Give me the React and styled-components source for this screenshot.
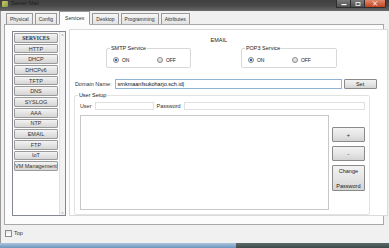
import React from "react";
import styled, { createGlobalStyle } from "styled-components";

const GlobalStyle = createGlobalStyle`
  html, body {
    margin: 0;
    padding: 0;
    background: #f0f0f0;
  }
  body {
    font-family: "Liberation Sans", Arial, sans-serif;
    font-size: 5.5px;
    color: #1a1a1a;
  }
`;

const services = [
  "SERVICES",
  "HTTP",
  "DHCP",
  "DHCPv6",
  "TFTP",
  "DNS",
  "SYSLOG",
  "AAA",
  "NTP",
  "EMAIL",
  "FTP",
  "IoT",
  "VM Management",
];

const tabs = ["Physical", "Config", "Services", "Desktop", "Programming", "Attributes"];

const Radio = ({ checked, label }) => (
  <RadioItem>
    <RadioDot $checked={checked} />
    <span>{label}</span>
  </RadioItem>
);

const App = () => {
  return (
    <Frame>
      <GlobalStyle />
      <TitleBar>
        <TitleIcon />
        <TitleText>Server Mail</TitleText>
        <Controls>
          <CtrlButton>
            <svg width="6" height="4" viewBox="0 0 6 4">
              <rect x="0.5" y="2" width="5" height="1.2" fill="#fff" />
            </svg>
          </CtrlButton>
          <CtrlButton>
            <svg width="6" height="4" viewBox="0 0 6 4">
              <rect x="1" y="0.5" width="4" height="3" fill="none" stroke="#fff" strokeWidth="0.8" />
            </svg>
          </CtrlButton>
          <CloseButton>
            <svg width="6" height="5" viewBox="0 0 6 5">
              <path d="M1 0.5 L5 4.5 M5 0.5 L1 4.5" stroke="#fff" strokeWidth="1" />
            </svg>
          </CloseButton>
        </Controls>
      </TitleBar>

      <WindowBody>
        <TabRow>
          {tabs.map((t) => (
            <Tab key={t} $active={t === "Services"}>
              {t}
            </Tab>
          ))}
        </TabRow>

        <TabPane>
          <ServiceList>
            <ListItems>
              {services.map((s) => (
                <ListButton key={s} $head={s === "SERVICES"}>
                  {s}
                </ListButton>
              ))}
            </ListItems>
            <ScrollBar>
              <ScrollArrow>˄</ScrollArrow>
              <ScrollArrow>˅</ScrollArrow>
            </ScrollBar>
          </ServiceList>

          <ConfigPane>
            <PaneTitle>EMAIL</PaneTitle>
            <ServiceRow>
              <GroupBox $width="85px">
                <GroupLabel>SMTP Service</GroupLabel>
                <RadioRow>
                  <Radio checked label="ON" />
                  <Radio label="OFF" />
                </RadioRow>
              </GroupBox>
              <GroupBox $width="96px">
                <GroupLabel>POP3 Service</GroupLabel>
                <RadioRow>
                  <Radio checked label="ON" />
                  <Radio label="OFF" />
                </RadioRow>
              </GroupBox>
            </ServiceRow>

            <DomainRow>
              <FieldLabel>Domain Name:</FieldLabel>
              <DomainInput>smkmaanfsukoharjo.sch.id|</DomainInput>
              <SmallButton $width="33px">Set</SmallButton>
            </DomainRow>

            <UserSetup>
              <GroupLabel>User Setup</GroupLabel>
              <UserRow>
                <FieldLabel>User</FieldLabel>
                <TextInput $width="59px" />
                <FieldLabel>Password</FieldLabel>
                <TextInput $grow />
              </UserRow>
              <UserBody>
                <UserList />
                <ButtonColumn>
                  <SmallButton $width="33px" $height="15px">+</SmallButton>
                  <SmallButton $width="33px" $height="15px">-</SmallButton>
                  <SmallButton $width="33px" $height="26px" $stack>
                    <span>Change</span>
                    <span>Password</span>
                  </SmallButton>
                </ButtonColumn>
              </UserBody>
            </UserSetup>
          </ConfigPane>
        </TabPane>

        <Footer>
          <CheckBox />
          <span>Top</span>
        </Footer>
      </WindowBody>

      <BottomStrip>
        <StripLeft />
        <StripRight />
      </BottomStrip>
    </Frame>
  );
};

const Frame = styled.div`
  width: 389px;
  height: 248px;
  display: flex;
  flex-direction: column;
  overflow: hidden;
  background: #f0f0f0;
`;

const TitleBar = styled.div`
  height: 11px;
  display: flex;
  align-items: flex-start;
  background: linear-gradient(180deg, #3e3e3e 0%, #4a4a4a 55%, #6a6a6a 100%);
  padding-left: 2px;
`;

const TitleIcon = styled.div`
  width: 6px;
  height: 6px;
  margin-top: 1px;
  background: linear-gradient(135deg, #d8c26a, #7aa246);
  border-radius: 1px;
`;

const TitleText = styled.span`
  margin-left: 3px;
  font-size: 5.5px;
  color: #1c1c1c;
  line-height: 7px;
`;

const Controls = styled.div`
  margin-left: auto;
  margin-right: 3px;
  display: flex;
`;

const CtrlButton = styled.div`
  width: 13px;
  height: 7px;
  display: flex;
  align-items: center;
  justify-content: center;
  background: linear-gradient(180deg, #7a7a7a, #505050);
  border: 1px solid #2e2e2e;
  border-top: none;
  border-right: none;
`;

const CloseButton = styled(CtrlButton)`
  width: 20px;
  background: linear-gradient(180deg, #e08a6c, #c2411f);
  border-right: 1px solid #2e2e2e;
  border-radius: 0 0 2px 0;
`;

const WindowBody = styled.div`
  flex: 1;
  display: flex;
  flex-direction: column;
  padding: 1px 5px 0 3px;
  background: #f0f0f0;
  border-left: 1px solid #9a9a9a;
`;

const TabRow = styled.div`
  height: 12px;
  display: flex;
  align-items: flex-end;
  padding-left: 2px;
  gap: 2px;
`;

const Tab = styled.div`
  height: ${(p) => (p.$active ? "12px" : "10px")};
  padding: 0 ${(p) => (p.$active ? "5px" : "3px")};
  display: flex;
  align-items: center;
  background: ${(p) => (p.$active ? "#fcfcfc" : "linear-gradient(180deg, #f6f6f6, #e2e2e2)")};
  border: 1px solid #999;
  border-bottom: ${(p) => (p.$active ? "1px solid #fcfcfc" : "none")};
  margin-bottom: ${(p) => (p.$active ? "-1px" : "0")};
  position: relative;
  z-index: ${(p) => (p.$active ? 1 : 0)};
  color: #333;
  font-size: 5px;
`;

const TabPane = styled.div`
  height: 201px;
  display: flex;
  padding: 4px 2px 8px 7px;
  gap: 3px;
  background: #fcfcfc;
  border: 1px solid #a8a8a8;
  box-sizing: border-box;
`;

const ServiceList = styled.div`
  width: 58px;
  display: flex;
  margin-top: 2px;
  border: 1px solid #828790;
  background: #fff;
  box-sizing: border-box;
`;

const ListItems = styled.div`
  flex: 1;
  display: flex;
  flex-direction: column;
  gap: 1px;
  padding: 1px;
`;

const ListButton = styled.div`
  height: 7.7px;
  display: flex;
  align-items: center;
  justify-content: center;
  font-weight: ${(p) => (p.$head ? "bold" : "normal")};
  font-family: ${(p) => (p.$head ? '"Liberation Serif", serif' : "inherit")};
  color: #333;
  background: linear-gradient(180deg, #f4f4f4 0%, #e4e4e4 50%, #d6d6d6 100%);
  border: 1px solid #9a9a9a;
  border-radius: 1px;
  white-space: nowrap;
`;

const ScrollBar = styled.div`
  width: 5px;
  display: flex;
  flex-direction: column;
  justify-content: space-between;
  align-items: center;
  background: #f2f2f2;
  border-left: 1px solid #e0e0e0;
`;

const ScrollArrow = styled.span`
  font-size: 4px;
  color: #888;
  line-height: 5px;
`;

const ConfigPane = styled.div`
  flex: 1;
  display: flex;
  flex-direction: column;
  background: #fff;
  border: 1px solid #dadada;
  padding: 6px 10px 2px 3px;
  box-sizing: border-box;
`;

const PaneTitle = styled.div`
  text-align: center;
  padding-right: 12px;
  height: 8px;
  line-height: 8px;
`;

const ServiceRow = styled.div`
  display: flex;
  padding-left: 33px;
  gap: 50px;
  margin-top: 4px;
`;

const GroupBox = styled.div`
  width: ${(p) => p.$width};
  height: 20px;
  border: 1px solid #d8d8d8;
  border-radius: 2px;
  box-sizing: border-box;
  position: relative;
`;

const GroupLabel = styled.span`
  position: absolute;
  top: -4px;
  left: 3px;
  padding: 0 1px;
  background: #fff;
  line-height: 7px;
`;

const RadioRow = styled.div`
  display: flex;
  gap: 24px;
  padding: 8px 0 0 6px;
`;

const RadioItem = styled.div`
  display: flex;
  align-items: center;
  gap: 3px;
  width: 20px;
  font-size: 5px;
`;

const RadioDot = styled.span`
  width: 4px;
  height: 4px;
  border-radius: 50%;
  border: 0.7px solid #8a8a8a;
  background: ${(p) =>
    p.$checked
      ? "radial-gradient(circle, #1f66c2 0%, #1f66c2 45%, #e8e8e8 55%)"
      : "linear-gradient(180deg, #f0f0f0, #d8d8d8)"};
`;

const DomainRow = styled.div`
  display: flex;
  align-items: center;
  margin-top: 11px;
  margin-left: 2px;
  height: 10px;
`;

const FieldLabel = styled.span`
  white-space: nowrap;
  color: #333;
`;

const DomainInput = styled.div`
  width: 227px;
  height: 10px;
  margin-left: 3px;
  padding-left: 2px;
  box-sizing: border-box;
  border: 1px solid #8fb3d6;
  background: #fff;
  line-height: 8px;
  color: #111;
`;

const SmallButton = styled.div`
  width: ${(p) => p.$width};
  height: ${(p) => p.$height || "10px"};
  margin-left: 2px;
  box-sizing: border-box;
  display: flex;
  flex-direction: ${(p) => (p.$stack ? "column" : "row")};
  align-items: center;
  justify-content: ${(p) => (p.$stack ? "space-between" : "center")};
  padding: ${(p) => (p.$stack ? "2px 0 1px" : "0")};
  background: linear-gradient(180deg, #f2f2f2 0%, #e6e6e6 50%, #d4d4d4 100%);
  border: 1px solid #8a8a8a;
  border-radius: 1px;
  color: #222;
`;

const UserSetup = styled.div`
  position: relative;
  margin-top: 6px;
  margin-left: 1px;
  width: 296px;
  flex: 1;
  border: 1px solid #e2e2e2;
  border-radius: 2px;
  box-sizing: border-box;
  padding: 6px 4px 4px 5px;
  display: flex;
  flex-direction: column;
`;

const UserRow = styled.div`
  display: flex;
  align-items: center;
  gap: 3px;
  height: 8px;
`;

const TextInput = styled.div`
  width: ${(p) => p.$width || "auto"};
  flex: ${(p) => (p.$grow ? 1 : "none")};
  height: 8px;
  box-sizing: border-box;
  border: 1px solid #e0e0e0;
  background: #fff;
`;

const UserBody = styled.div`
  display: flex;
  margin-top: 5px;
  gap: 1px;
`;

const UserList = styled.div`
  width: 249px;
  height: 95px;
  box-sizing: border-box;
  border: 1px solid #c8c8c8;
  background: #fff;
`;

const ButtonColumn = styled.div`
  display: flex;
  flex-direction: column;
  gap: 4px;
  padding-top: 12px;
`;

const Footer = styled.div`
  height: 16px;
  display: flex;
  align-items: center;
  gap: 2px;
  padding-left: 1px;
  color: #333;
`;

const CheckBox = styled.span`
  width: 5px;
  height: 5px;
  border: 1px solid #8a8a8a;
  background: linear-gradient(180deg, #e8e8e8, #fff);
`;

const BottomStrip = styled.div`
  height: 5px;
  display: flex;
`;

const StripLeft = styled.div`
  width: 236px;
  background: linear-gradient(180deg, #a9c4dc, #6d95bb);
`;

const StripRight = styled.div`
  flex: 1;
  background: linear-gradient(180deg, #5c6a6a, #3d4a48);
`;

export default App;
